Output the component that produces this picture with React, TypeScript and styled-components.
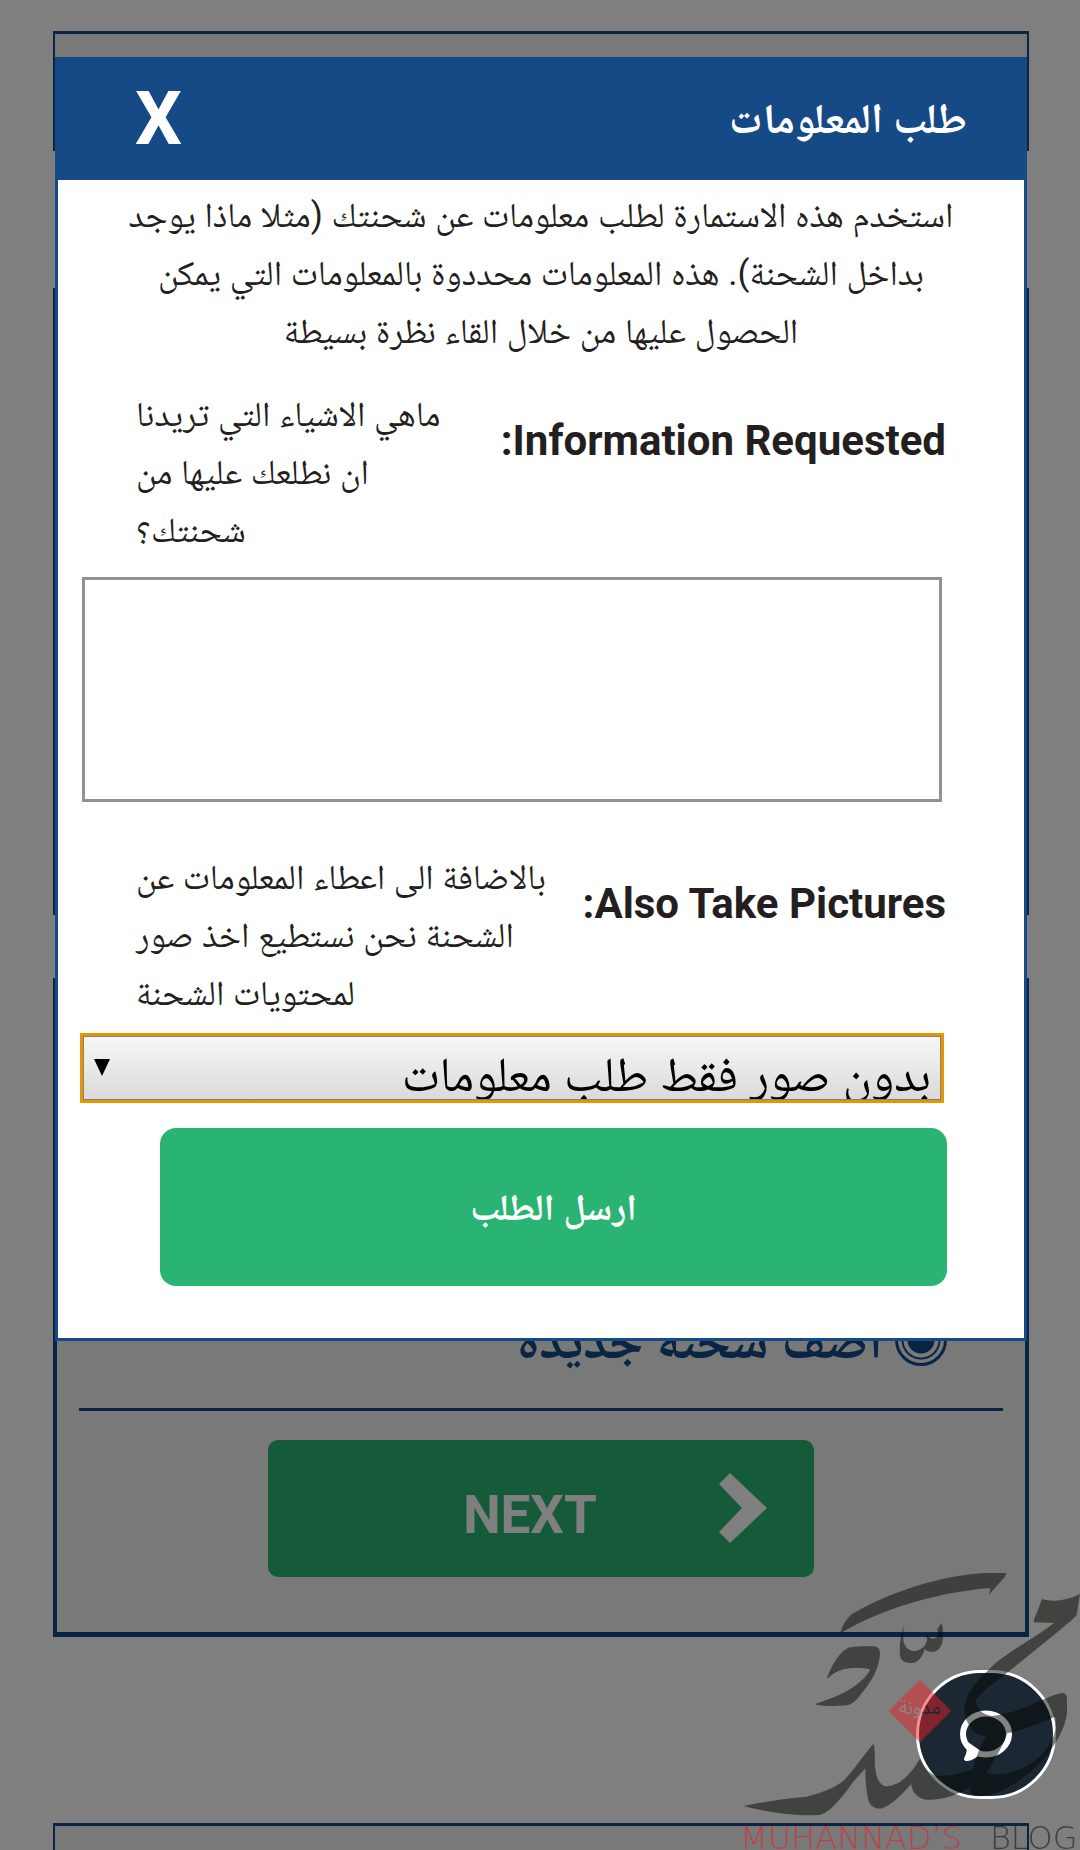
import React from 'react';
import styled, { createGlobalStyle } from 'styled-components';

const navy = '#154a86';
const green = '#2ab473';
const ink = '#231f20';

const GlobalStyle = createGlobalStyle`
  *, *::before, *::after { box-sizing: border-box; }
  body {
    margin: 0;
    background: #fff;
    color: ${ink};
    font-family: Roboto, "Noto Naskh Arabic", "DejaVu Sans", sans-serif;
    overflow: hidden;
  }
`;

/* ---------- page behind the dialog ---------- */

const Page = styled.main`
  display: flex;
  flex-direction: column;
  padding: 31px 51px 0 53px;
`;

const Card = styled.section<{ $minHeight: number; $gap: number; $sides?: number; $bottom?: number }>`
  display: flex;
  flex-direction: column;
  justify-content: flex-end;
  min-height: ${(p) => p.$minHeight}px;
  margin-bottom: ${(p) => p.$gap}px;
  background: #f2f2f2;
  border: solid ${navy};
  border-width: 3px ${(p) => p.$sides ?? 2}px ${(p) => p.$bottom ?? 2}px;
`;

const Option = styled.label`
  display: flex;
  align-items: center;
  gap: 12px;
  padding: 0 78px 0 22px;
  color: ${navy};
  font-size: 53px;
  font-weight: 700;
  line-height: 80px;
`;

const Radio = styled.input`
  appearance: none;
  width: 52px;
  height: 52px;
  margin: 0;
  border: 3px solid ${navy};
  border-radius: 50%;
  background: radial-gradient(circle, ${navy} 13px, transparent 14px, transparent 17px, ${navy} 18px, ${navy} 19px, transparent 20px);
`;

const Divider = styled.hr`
  align-self: stretch;
  margin: 28px 22px 29px;
  border: 0;
  border-top: 3px solid ${navy};
`;

const NextButton = styled.button`
  align-self: center;
  display: grid;
  grid-template-columns: 1fr 142px;
  align-items: center;
  width: 546px;
  max-width: 100%;
  height: 137px;
  margin-bottom: 55px;
  padding: 0 0 2px;
  border: 0;
  border-radius: 10px;
  background: ${green};
  color: #fff;
  direction: ltr;
  font: 700 53px/60px Roboto, sans-serif;
`;

const NextLabel = styled.span`
  padding: 14px 0 0 120px;
`;

const Chevron = styled.svg`
  justify-self: center;
  width: 50px;
  height: 72px;
  fill: currentColor;
`;

/* ---------- dialog ---------- */

const Overlay = styled.div`
  position: fixed;
  inset: 0;
  padding: 57px 53px 0 55px;
  background: rgba(0, 0, 0, 0.5);
`;

const Dialog = styled.div`
  background: #fff;
  border: 3px solid ${navy};
`;

const Header = styled.header`
  display: flex;
  align-items: center;
  justify-content: space-between;
  height: 120px;
  padding: 0 57px 2px 77px;
  background: ${navy};
  color: #fff;
`;

const Title = styled.h2`
  margin: 0;
  font-size: 42px;
  line-height: 58px;
`;

const CloseButton = styled.button`
  padding: 0;
  border: 0;
  background: none;
  color: #fff;
  font: 700 74px/80px Roboto, sans-serif;
`;

const Form = styled.form`
  display: flex;
  flex-direction: column;
  padding: 7px 82px 52px 24px;
  line-height: 58px;
  font-size: 35px;
`;

const Intro = styled.p`
  margin: 0 -16px 25px 42px;
  text-align: center;
`;

const Field = styled.div`
  display: flex;
  justify-content: space-between;
  margin-right: -4px;
  padding-left: 54px;
`;

const Label = styled.label`
  padding-top: 26px;
  font-size: 42px;
  font-weight: 700;
  white-space: nowrap;
`;

const Hint = styled.p<{ $width: number }>`
  width: ${(p) => p.$width}px;
  margin: 0;
  text-align: left;
`;

const TextBox = styled.textarea`
  width: 100%;
  height: 225px;
  margin: 17px 0 47px;
  padding: 12px;
  border: 3px solid #929292;
  background: #fff;
  font: inherit;
  resize: none;
`;

const SelectBox = styled.div`
  position: relative;
  display: flex;
  margin: 12px 0 27px;
`;

const Select = styled.select`
  appearance: none;
  width: 100%;
  height: 66px;
  padding: 6px 9px 0 60px;
  border: 2px solid #7d8288;
  border-radius: 0;
  outline: 3px solid #e59700;
  outline-offset: -1px;
  background: linear-gradient(#f7f7f7, #dadada);
  color: #000;
  font-family: inherit;
  font-size: 49px;
  line-height: 64px;
`;

const SelectArrow = styled.svg`
  position: absolute;
  left: 12px;
  top: 24px;
  width: 16px;
  height: 17px;
  pointer-events: none;
`;

const SubmitButton = styled.button`
  height: 158px;
  margin: 0 -5px 0 78px;
  padding: 8px 0 0;
  border: 0;
  border-radius: 16px;
  background: ${green};
  color: #fff;
  font-family: inherit;
  font-size: 37px;
  font-weight: 700;
`;

/* ---------- floating items ---------- */

const ChatButton = styled.button`
  position: fixed;
  right: 24px;
  bottom: 51px;
  display: grid;
  place-items: center;
  width: 140px;
  height: 129px;
  padding: 0;
  border: 3px solid #fff;
  border-radius: 65px;
  background: #1b2733;
`;

const ChatIcon = styled.svg`
  width: 56px;
  height: 60px;
  fill: none;
  stroke: #fff;
  stroke-width: 6;
  stroke-linejoin: round;
`;

const Watermark = styled.div`
  position: fixed;
  right: 0;
  bottom: 0;
  width: 340px;
  height: 300px;
  direction: ltr;
  pointer-events: none;
`;

const Calligraphy = styled.svg`
  display: block;
  width: 360px;
  height: 300px;
  margin-left: -20px;
`;

const Wordmark = styled.div`
  position: absolute;
  left: 0;
  bottom: 0;
  display: flex;
  gap: 28px;
  color: rgba(0, 0, 0, 0.5);
  font: 200 32px/24px "DejaVu Sans", sans-serif;
  white-space: nowrap;
`;

const WordmarkName = styled.span`
  color: rgba(232, 32, 38, 0.6);
`;

export default function App() {
  return (
    <div dir="rtl" lang="ar">
      <GlobalStyle />
      <Page>
        <Card $minHeight={120} $gap={137} />
        <Card $minHeight={627} $gap={63} />
        <Card $minHeight={659} $gap={186} $sides={4} $bottom={5}>
          <Option>
            <Radio type="radio" name="shipment" defaultChecked />
            أضف شحنة جديدة
          </Option>
          <Divider />
          <NextButton type="button">
            <NextLabel>NEXT</NextLabel>
            <Chevron viewBox="0 0 50 72" aria-hidden="true">
              <path d="M12 1 49 36 12 71 1 60 24 36 1 12Z" />
            </Chevron>
          </NextButton>
        </Card>
        <Card $minHeight={60} $gap={0} />
      </Page>

      <Overlay>
        <Dialog role="dialog" aria-modal="true" aria-labelledby="dialog-title">
          <Header>
            <Title id="dialog-title">طلب المعلومات</Title>
            <CloseButton type="button">X</CloseButton>
          </Header>
          <Form onSubmit={(e) => e.preventDefault()}>
            <Intro>
              استخدم هذه الاستمارة لطلب معلومات عن شحنتك (مثلا ماذا يوجد بداخل الشحنة). هذه المعلومات محددوة بالمعلومات التي
              يمكن الحصول عليها من خلال القاء نظرة بسيطة
            </Intro>
            <Field>
              <Label htmlFor="info">Information Requested:</Label>
              <Hint $width={320}>ماهي الاشياء التي تريدنا ان نطلعك عليها من شحنتك؟</Hint>
            </Field>
            <TextBox id="info" />
            <Field>
              <Label htmlFor="pictures">Also Take Pictures:</Label>
              <Hint $width={430}>بالاضافة الى اعطاء المعلومات عن الشحنة نحن نستطيع اخذ صور لمحتويات الشحنة</Hint>
            </Field>
            <SelectBox>
              <Select id="pictures">
                <option>بدون صور فقط طلب معلومات</option>
              </Select>
              <SelectArrow viewBox="0 0 16 17" aria-hidden="true">
                <path d="M0 0H16L8 17Z" />
              </SelectArrow>
            </SelectBox>
            <SubmitButton type="submit">ارسل الطلب</SubmitButton>
          </Form>
        </Dialog>
      </Overlay>

      <ChatButton type="button" aria-label="Chat">
        <ChatIcon viewBox="0 0 56 60" aria-hidden="true">
          <ellipse cx="28" cy="29" rx="23" ry="20.500" />
          <path fill="#fff" strokeWidth="4" d="M9 39C12 43 11 48 8 54C13 55 17 50 22 48Z" />
        </ChatIcon>
      </ChatButton>

      <Watermark>
        <Calligraphy viewBox="0 0 360 300" aria-hidden="true">
          <defs>
            <linearGradient id="tone" gradientUnits="userSpaceOnUse" x1="180" x2="221" y1="0" y2="0">
              <stop offset="0.5" stopColor="#85898a" />
              <stop offset="0.6" stopColor="#1b2733" />
            </linearGradient>
          </defs>
          <g transform="scale(0.33333)" opacity="0.5" fill="#050805" fillRule="evenodd">
            <path d="M361 250C368 222 382 204 396 192C500 130 660 75 800 69L858 69C858 78 852 84 846 90L806 135L811 120C812 116 810 114 800 115C640 130 480 180 361 250Z" />
            <path d="M556 222C548 235 549 260 551 275C556 295 570 305 588 303C610 298 621 282 621 268L616 250C626 266 640 270 650 262C656 256 654 245 652 238L665 219C670 240 670 262 667 278C660 298 648 308 632 305C624 304 618 300 614 296C608 320 594 338 576 339C552 340 541 330 540 315C538 285 542 245 556 222Z" />
            <path d="M321 384C335 345 355 310 384 293C410 288 440 288 465 289C475 292 480 298 480 310C478 350 460 385 440 410C420 435 405 462 380 466C350 469 310 468 288 464L288 461C340 445 385 425 415 400C435 383 447 370 450 358C420 352 390 354 370 358C350 364 335 374 325 384Z" />
            <path d="M966 147C1000 157 1040 152 1080 132L1070 195C1055 212 1040 222 1020 240L860 370C820 400 785 425 768 450C768 475 780 490 815 498C860 494 900 480 950 457C980 445 1005 432 1028 429C1038 430 1041 436 1041 450L1041 490C1036 530 1015 570 985 610C950 655 900 695 850 720C820 735 790 740 765 738C752 735 748 725 750 712C715 735 660 752 620 749C590 745 577 725 573 702C550 730 520 760 490 774C470 780 450 770 445 750C438 720 436 690 436 655L400 695C370 735 340 780 300 795C230 800 130 785 70 768C130 755 200 745 260 740C320 725 350 710 375 688C405 655 435 610 460 582C466 590 464 620 465 650C468 680 478 708 500 709C540 708 575 670 600 625C610 650 625 668 645 677C690 680 730 672 760 655C768 620 780 590 800 555L785 557C750 545 735 510 733 480C735 430 765 400 800 365C850 310 930 275 1002 219L942 217C940 210 945 200 950 190ZM862 550C910 540 960 520 1005 500C1020 570 960 640 880 665C850 673 820 675 800 670C815 640 845 600 862 550Z" />
            <path fill="#e82026" d="M600 389 694 483 600 577 506 483Z" />
          </g>
          <text x="200" y="164" textAnchor="middle" fill="url(#tone)" fontFamily="Noto Sans Arabic, DejaVu Sans, sans-serif" fontSize="19">
            مدونة
          </text>
        </Calligraphy>
        <Wordmark>
          <WordmarkName>MUHANNAD’S</WordmarkName>
          <span>BLOG</span>
        </Wordmark>
      </Watermark>
    </div>
  );
}
